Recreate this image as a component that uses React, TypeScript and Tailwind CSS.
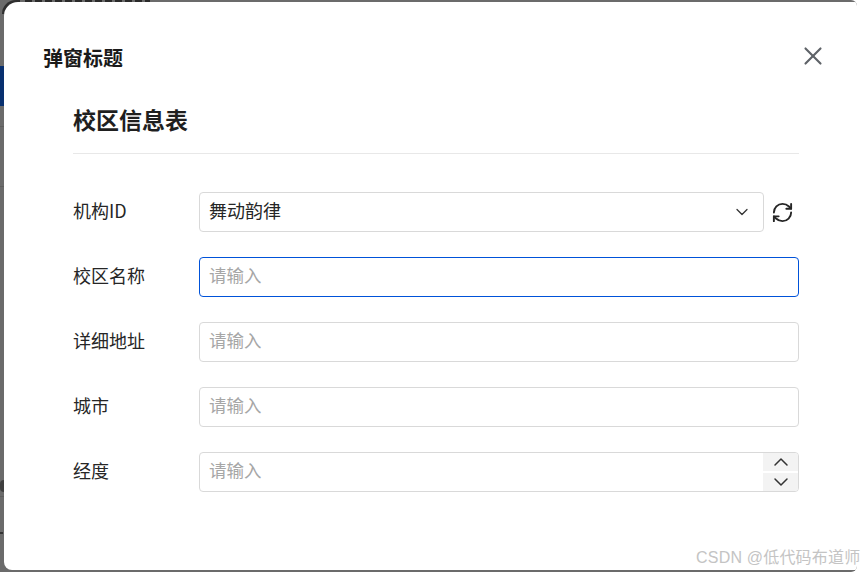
import { ChevronDown, ChevronUp, RefreshCw, X } from "lucide-react";

const fields = ["详细地址", "城市"];

const Row = ({ label, children }: { label: string; children: React.ReactNode }) => {
  return (
    <div className="flex items-center h-10 mb-[25px]">
      <label className="w-[126px] pb-[4px] text-[18px] text-[#262626] shrink-0">{label}</label>
      {children}
    </div>
  );
};

const Placeholder = () => {
  return <span className="pb-[4px] text-[17.5px] text-[#a6a6a6]">请输入</span>;
};

const App = () => {
  return (
    <div className="relative w-[864px] h-[572px] overflow-hidden bg-white font-['Noto_Sans_CJK_SC','Liberation_Sans',sans-serif]">
      <div className="relative w-[857px] h-full overflow-hidden rounded-tr-[6px] rounded-br-[6px] bg-[#6b6b6b] pt-[2px] pb-[2px] pl-[4px]">
        {/* page behind the dialog */}
        <div className="absolute left-[25px] top-0 w-[125px] h-[2px] bg-[repeating-linear-gradient(90deg,#2a2a2a_0_7px,#6b6b6b_7px_10px)]" />
        <div className="absolute left-[2px] top-0 w-[18px] h-[14px] bg-[#2f2f2f] rounded-tl-[14px]" />
        <div className="absolute left-0 top-[66px] w-[4px] h-[40px] bg-[#08306f]" />
        <div className="absolute left-0 top-[126px] w-[4px] h-px bg-[#5e5e5e]" />
        <div className="absolute left-0 top-[186px] w-[4px] h-px bg-[#5e5e5e]" />
        <div className="absolute left-0 top-[480px] w-[4px] h-[12px] bg-[#3f3f3f] rounded-l-full" />
        <div className="absolute left-0 top-[496px] w-[4px] h-px bg-[#5e5e5e]" />
        <div className="absolute left-0 top-[532px] w-[3px] h-[2px] bg-[#333333]" />

        <div className="relative h-full bg-white rounded-tl-[14px] rounded-bl-[8px]">
          <div className="flex items-center justify-between pl-[39px] pr-[29px] pt-[42px]">
            <h2 className="text-[20px] leading-[28px] font-bold text-[#1a1a1a]">弹窗标题</h2>
            <X size={30} strokeWidth={1.7} className="-mt-1 text-[#5f6368]" />
          </div>

          <div className="pl-[69px] pr-[58px] pt-[31px]">
            <h3 className="text-[23px] leading-[32px] font-bold text-[#1f1f1f] pb-[18px] border-b border-[#e8e8e8]">
              校区信息表
            </h3>

            <div className="pt-[38px]">
              <Row label="机构ID">
                <div className="flex-1 h-10 flex items-center justify-between pl-[9px] pr-[11px] border border-[#d9d9d9] rounded-[4px] text-[18px] text-[#262626]">
                  <span className="pb-[4px]">舞动韵律</span>
                  <ChevronDown size={20} strokeWidth={1.5} className="text-[#333333]" />
                </div>
                <div className="w-[35px] flex justify-end pr-[5px]">
                  <RefreshCw size={23} strokeWidth={2} className="text-[#262626]" />
                </div>
              </Row>

              <Row label="校区名称">
                <div className="flex-1 h-10 flex items-center pl-[9px] border border-[#0052d9] rounded-[4px]">
                  <Placeholder />
                </div>
              </Row>

              {fields.map((f) => (
                <Row key={f} label={f}>
                  <div className="flex-1 h-10 flex items-center pl-[9px] border border-[#d9d9d9] rounded-[4px]">
                    <Placeholder />
                  </div>
                </Row>
              ))}

              <Row label="经度">
                <div className="flex-1 h-10 flex items-center justify-between pl-[9px] border border-[#d9d9d9] rounded-[4px] overflow-hidden">
                  <Placeholder />
                  <div className="w-[35px] h-full flex flex-col gap-[2px]">
                    <div className="h-[18px] bg-[#f3f3f3] flex items-center justify-center">
                      <ChevronUp size={24} strokeWidth={1.5} className="shrink-0 text-[#333333]" />
                    </div>
                    <div className="h-[18px] bg-[#f3f3f3] flex items-center justify-center">
                      <ChevronDown size={24} strokeWidth={1.5} className="shrink-0 text-[#333333]" />
                    </div>
                  </div>
                </div>
              </Row>
            </div>
          </div>
        </div>
      </div>

      <div className="absolute left-[696px] top-[547px] text-[16px] leading-[22px] tracking-[0.2px] text-[#c4c4c4] whitespace-nowrap font-['Liberation_Sans','Noto_Sans_CJK_SC',sans-serif]">
        CSDN @低代码布道师
      </div>
    </div>
  );
};

export default App;
